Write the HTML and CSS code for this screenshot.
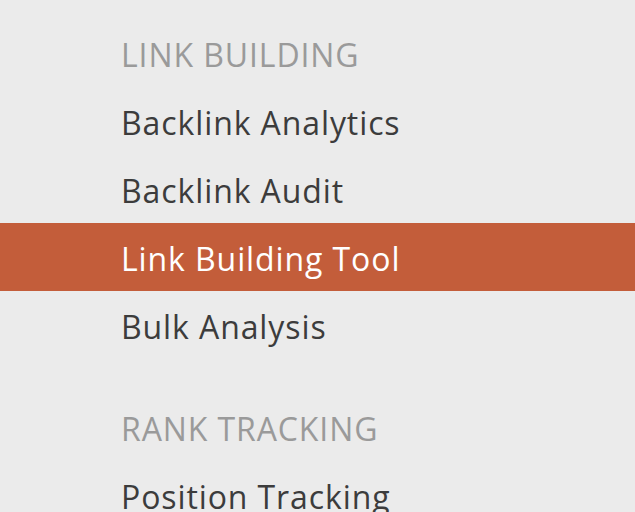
FILE: index.html
```html
<!DOCTYPE html>
<html lang="en">
<head>
<meta charset="utf-8">
<title>Menu</title>
<link rel="stylesheet" href="styles.css">
</head>
<body>
<nav class="menu">
  <div class="group">
    <div class="heading">LINK BUILDING</div>
    <a class="item" href="#">Backlink Analytics</a>
    <a class="item" href="#">Backlink Audit</a>
    <a class="item active" href="#">Link Building Tool</a>
    <a class="item" href="#">Bulk Analysis</a>
  </div>
  <div class="group">
    <div class="heading">RANK TRACKING</div>
    <a class="item" href="#">Position Tracking</a>
  </div>
</nav>
</body>
</html>
```
FILE: styles.css
```css
html, body {
  margin: 0;
  padding: 0;
  background: #ebebeb;
  overflow: hidden;
}
body {
  font-family: "Open Sans", "Lato", sans-serif;
  font-size: 32px;
  letter-spacing: 0.9px;
}
.menu {
  display: flex;
  flex-direction: column;
  gap: 34px;
  padding-top: 19px;
}
.group {
  display: flex;
  flex-direction: column;
}
.heading, .item {
  display: block;
  height: 64px;
  padding-top: 4px;
  line-height: 64px;
  padding-left: 121px;
  white-space: nowrap;
}
.heading {
  color: #9a9a9a;
}
.item {
  color: #3c3c3c;
  text-decoration: none;
}
.item.active {
  background: #c35d3a;
  color: #ffffff;
}
```
